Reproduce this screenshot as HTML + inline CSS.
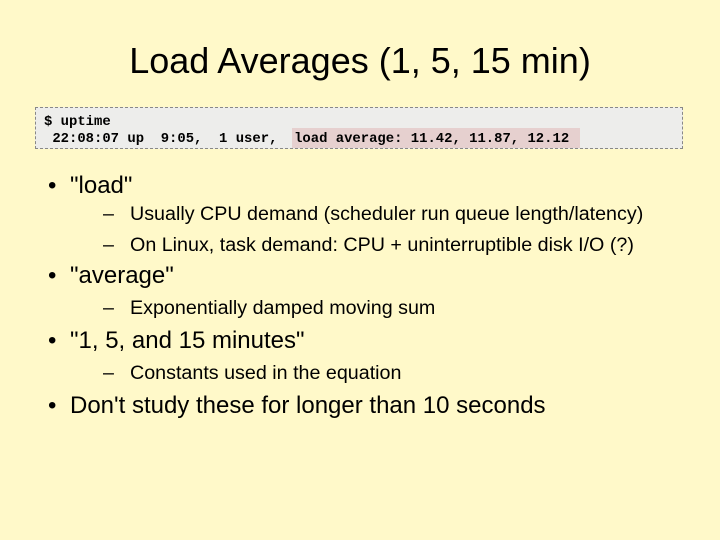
<!DOCTYPE html>
<html><head><style>
body{margin:0;width:720px;height:540px;background:#fff9c9;font-family:"Liberation Sans",sans-serif;position:relative;overflow:hidden}
.t{position:absolute;left:0;width:720px;text-align:center;top:40px;font-size:36px;color:#000}
.box{position:absolute;left:35px;top:107px;width:648px;height:42px;background:#ededeb;border:1px dashed #888;box-sizing:border-box}
.mono{position:absolute;font-family:"Liberation Mono",monospace;font-weight:bold;font-size:13.9px;white-space:pre;color:#000}
.hl{position:absolute;left:292px;top:128px;width:288px;height:20px;background:#e6d0cf}
.b{position:absolute;left:48px;font-size:24px;white-space:pre}
.b span{position:absolute;left:22px}
.s{position:absolute;left:103px;font-size:19.7px;white-space:pre}
.s span{position:absolute;left:27px}
</style></head><body>
<div class="t">Load Averages (1, 5, 15 min)</div>
<div class="box"></div>
<div class="hl"></div>
<div class="mono" style="left:44px;top:114px">$ uptime</div>
<div class="mono" style="left:44px;top:131px"> 22:08:07 up  9:05,  1 user,  load average: 11.42, 11.87, 12.12</div>
<div class="b" style="top:172px">•<span>"load"</span></div>
<div class="s" style="top:203px">–<span>Usually CPU demand (scheduler run queue length/latency)</span></div>
<div class="s" style="top:234px">–<span>On Linux, task demand: CPU + uninterruptible disk I/O (?)</span></div>
<div class="b" style="top:262px">•<span>"average"</span></div>
<div class="s" style="top:297px">–<span>Exponentially damped moving sum</span></div>
<div class="b" style="top:327px">•<span>"1, 5, and 15 minutes"</span></div>
<div class="s" style="top:362px">–<span>Constants used in the equation</span></div>
<div class="b" style="top:392px">•<span>Don't study these for longer than 10 seconds</span></div>
</body></html>
